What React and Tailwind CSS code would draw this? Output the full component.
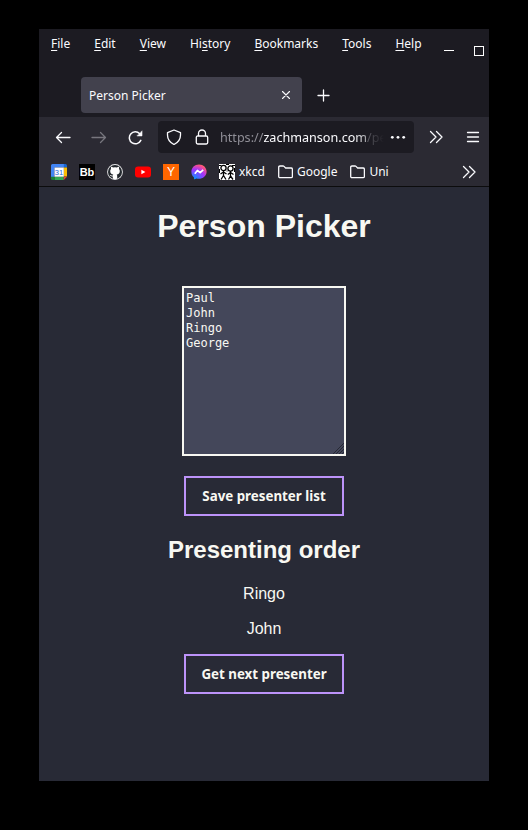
import React from 'react';

const menuItems = [
  ['', 'F', 'ile'],
  ['', 'E', 'dit'],
  ['', 'V', 'iew'],
  ['Hi', 's', 'tory'],
  ['', 'B', 'ookmarks'],
  ['', 'T', 'ools'],
  ['', 'H', 'elp'],
];

function Icon({ children, className = '', size = 16 }) {
  return (
    <svg
      width={size}
      height={size}
      viewBox={`0 0 ${size} ${size}`}
      fill="none"
      stroke="currentColor"
      strokeWidth="1.3"
      strokeLinecap="round"
      strokeLinejoin="round"
      className={`block shrink-0 ${className}`}
    >
      {children}
    </svg>
  );
}

const Chevrons = ({ className }) => (
  <Icon className={className}>
    <path d="M2.500 2.500 8 8l-5.500 5.500M8.500 2.500 14 8l-5.500 5.500" />
  </Icon>
);

const Folder = () => (
  <Icon>
    <path d="M1.700 12.400V3.300q0-1.300 1.300-1.300H6q.6 0 1 .4L8.600 4h5.500q1.300 0 1.300 1.300v7.100q0 1.300-1.300 1.300H3Q1.700 13.700 1.700 12.400Z" />
  </Icon>
);

function MenuBar() {
  return (
    <div className="flex h-11 items-start pl-3 text-xs text-[#fbfbfe]">
      <div className="flex gap-6 pt-[6px] leading-[18px]">
        {menuItems.map(([pre, key, post]) => (
          <span key={key + post}>
            {pre}
            <span className="underline decoration-1 underline-offset-2">{key}</span>
            {post}
          </span>
        ))}
      </div>
      <div className="ml-auto flex pr-[5px] pt-[17px]">
        <div className="mr-5 mt-1 h-px w-[10px] bg-white" />
        <div className="size-[10px] border border-white" />
      </div>
    </div>
  );
}

function TabStrip() {
  return (
    <div className="flex h-11 items-center pl-[42px] text-[#fbfbfe]">
      <div className="flex h-9 w-[221px] items-center justify-between rounded bg-[#42414d] px-2 text-xs">
        <span className="pt-0.5">Person Picker</span>
        <Icon>
          <path strokeWidth="1.1" d="m4.500 4.500 7 7m0-7-7 7" />
        </Icon>
      </div>
      <Icon className="ml-[13px]">
        <path d="M8.500 3v11M3 8.500h11" />
      </Icon>
    </div>
  );
}

function NavBar() {
  return (
    <div className="flex h-10 items-center pl-4 text-[#fbfbfe]">
      <Icon>
        <path d="M15 8.500H1.500m5-5-5 5 5 5" />
      </Icon>
      <Icon className="ml-5 text-[#77767e]">
        <path d="M1 8.500h13.500m-5-5 5 5-5 5" />
      </Icon>
      <Icon className="ml-5">
        <path strokeWidth="1.500" d="M13.800 11.400A6 6 0 1 1 12.700 4.700" />
        <path fill="currentColor" strokeWidth=".6" d="M15 2.200v4.700h-4.700Z" />
      </Icon>
      <div className="ml-[15px] flex h-8 w-64 items-center rounded bg-[#1c1b22] pl-2">
        <Icon>
          <path d="M8 1 14.500 3.600v2.300c0 4-2.500 7.500-6.500 9.600C4 13.400 1.500 9.900 1.500 5.900V3.600Z" />
        </Icon>
        <Icon className="ml-3">
          <path d="M4.500 7V4.500a3.500 3.500 0 0 1 7 0V7M3.700 7h8.600q1.400 0 1.400 1.400v5.200q0 1.400-1.400 1.400H3.700q-1.400 0-1.400-1.400V8.400Q2.300 7 3.700 7Z" />
        </Icon>
        <div className="ml-[10px] w-[164px] overflow-hidden whitespace-nowrap pt-0.5 text-[12.6px] text-[#8f8e96] [mask-image:linear-gradient(to_right,#000_134px,transparent_164px)]">
          https://<span className="text-[#fbfbfe]">zachmanson.com</span>/pe
        </div>
        <svg width="16" height="16" viewBox="0 0 16 16" fill="currentColor" className="ml-[6px] shrink-0">
          <circle cx="2.300" cy="8.300" r="1.400" />
          <circle cx="8" cy="8.300" r="1.400" />
          <circle cx="13.700" cy="8.300" r="1.400" />
        </svg>
      </div>
      <Chevrons className="ml-[14px]" />
      <Icon className="ml-[21px]">
        <path d="M2.500 3.500h11M2.500 8h11M2.500 12.500h11" />
      </Icon>
    </div>
  );
}

function Calendar() {
  return (
    <svg width="16" height="16" viewBox="0 0 16 16">
      <path fill="#4285f4" d="M1.500 0H13v3.500H3.500V13H0V1.500Q0 0 1.500 0Z" />
      <path fill="#1967d2" d="M12.800 0h1.700Q16 0 16 1.500v2h-3.200Z" />
      <path fill="#fbbc04" d="M12.800 3.500H16v9h-3.200Z" />
      <path fill="#34a853" d="M3.500 12.700h9.300V16H3.500Z" />
      <path fill="#188038" d="M0 12.700h3.500V16h-2Q0 16 0 14.500Z" />
      <path fill="#ea4335" d="M12.800 16v-3.300H16Z" />
      <path fill="#fff" d="M3.500 3.500h9.300v9.200H3.500Z" />
      <text x="8" y="10.900" textAnchor="middle" fontSize="7.500" fontFamily="Liberation Sans, sans-serif" fill="#1a66e0">31</text>
    </svg>
  );
}

function GitHub() {
  return (
    <svg width="16" height="16" viewBox="0 0 16 16">
      <circle cx="8" cy="8" r="7.900" fill="#e8e8ea" />
      <circle cx="8" cy="8" r="7" fill="#24292e" />
      <path
        fill="#fff"
        d="M5.800 14.700v-2.200c-2 .4-2.400-.8-2.900-1.400 1.200-.2 1.500 1 2.900.5q.1-.7.500-1.100C4.400 10.300 3.200 9.400 3.200 7q0-1.200.8-2.100-.3-1 .1-2.100 1 0 2.100.8 1.800-.5 3.600 0 1.200-.8 2.100-.8.4 1.100.1 2.100.8.900.8 2.100c0 2.400-1.200 3.300-3.100 3.500q.5.500.5 1.500v2.700Q8 15.400 5.800 14.700Z"
      />
    </svg>
  );
}

function YouTube() {
  return (
    <svg width="16" height="16" viewBox="0 0 16 16">
      <rect x="0" y="2.500" width="16" height="11" rx="3" fill="#f00" />
      <path fill="#fff" d="M6.400 5.700v4.600l4-2.300Z" />
    </svg>
  );
}

function Messenger() {
  return (
    <svg width="16" height="16" viewBox="0 0 16 16">
      <defs>
        <radialGradient id="messenger" cx=".2" cy="1" r="1.100">
          <stop offset="0" stopColor="#0099ff" />
          <stop offset=".6" stopColor="#a033ff" />
          <stop offset=".92" stopColor="#ff5280" />
          <stop offset="1" stopColor="#ff7061" />
        </radialGradient>
      </defs>
      <path
        fill="url(#messenger)"
        d="M8 .4C3.600.400.400 3.500.400 7.700c0 2.300.9 4.200 2.500 5.500l.1 1.500q.1.700.8.500l1.600-.7c5.200 1.300 10.200-2 10.200-6.800C15.600 3.500 12.400.400 8 .400Z"
      />
      <path fill="none" stroke="#fff" strokeWidth="1.700" strokeLinejoin="round" d="M3.800 9.700 6.400 6.500 9.200 8.700 12.200 5.900" />
    </svg>
  );
}

function Xkcd() {
  return (
    <svg width="16" height="16" viewBox="0 0 16 16" fill="none" stroke="#000">
      <path fill="#fff" stroke="none" d="M0 0h16v16H0Z" />
      <circle cx="4.500" cy="4" r="2.600" strokeWidth="1.300" />
      <circle cx="11.500" cy="4.500" r="2.600" strokeWidth="1.300" />
      <path strokeWidth="1.300" d="M4.500 7v4.500M1.500 10l3-2 3 2M4.500 11.500l-2.500 4m2.500-4 2.500 4M11.500 7v5M8.800 10.500l2.700-2 3 2M11.500 12l-2 3.500m2-3.500 2.500 3.500" />
      <path strokeWidth="1" d="M0 1.500h2.500M7 .5h3M13 1.500h3M15.500 4v4M.5 5v4M0 15.500h1M7.500 7h1" />
    </svg>
  );
}

function Bookmarks() {
  return (
    <div className="flex h-[29px] items-center pt-px pl-3 text-xs text-[#fbfbfe]">
      <div className="flex items-center gap-3">
        <Calendar />
        <span className="flex size-4 items-center justify-center bg-black font-['Liberation_Sans',sans-serif] text-[11px] font-bold leading-none text-white">
          Bb
        </span>
        <GitHub />
        <YouTube />
        <span className="flex size-4 items-center justify-center bg-[#ff6600] font-['Liberation_Sans',sans-serif] text-[12px] leading-none text-white">
          Y
        </span>
        <Messenger />
        <span className="flex items-center gap-1"><Xkcd />xkcd</span>
        <span className="flex items-center gap-1"><Folder />Google</span>
        <span className="flex items-center gap-1"><Folder />Uni</span>
      </div>
      <Chevrons className="ml-auto mr-[12px]" />
    </div>
  );
}

function PresenterButton({ children, className = '' }) {
  return (
    <button
      type="button"
      className={`h-10 w-40 whitespace-nowrap border-2 border-[#bd93f9] pt-0.5 text-[13.333px] font-bold text-[#f8f8f2] ${className}`}
    >
      {children}
    </button>
  );
}

function Page() {
  return (
    <main className="flex flex-1 flex-col items-center bg-[#282a36] font-['Liberation_Sans',Arial,sans-serif] text-[#f8f8f2]">
      <h1 className="mt-[21px] text-[32px] font-bold leading-[37px]">Person Picker</h1>
      <div className="relative mt-[41px] h-[170px] w-[164px]">
        <textarea
          className="block size-full resize-none overflow-hidden border-2 border-[#f8f8f2] bg-[#44475a] px-[2px] pb-[2px] pt-[3px] font-['DejaVu_Sans_Mono',monospace] text-xs leading-[15px] text-[#f8f8f2] outline-none"
          defaultValue={'Paul\nJohn\nRingo\nGeorge'}
          spellCheck={false}
        />
        <svg width="11" height="11" viewBox="0 0 11 11" className="pointer-events-none absolute bottom-[2px] right-[2px]" stroke="#20222b" strokeWidth=".8">
          <path d="M0 11 11 0M3 11l8-8M6 11l5-5M9 11l2-2" />
        </svg>
      </div>
      <PresenterButton className="mt-5 font-['Noto_Sans',sans-serif]">Save presenter list</PresenterButton>
      <h2 className="mt-5 text-2xl font-bold leading-7">Presenting order</h2>
      <p className="mt-5 text-base leading-[19px]">Ringo</p>
      <p className="mt-4 text-base leading-[19px]">John</p>
      <PresenterButton className="mt-4 font-['Noto_Sans',sans-serif]">Get next presenter</PresenterButton>
    </main>
  );
}

export default function App() {
  return (
    <div className="flex h-screen w-screen overflow-hidden bg-black pl-[39px] pt-[29px] font-['Noto_Sans',sans-serif]">
      <div className="flex h-[752px] w-[450px] flex-col bg-[#1c1b22]">
        <MenuBar />
        <TabStrip />
        <div className="h-[70px] border-b border-[#0c0c0d] bg-[#2b2a33]">
          <NavBar />
          <Bookmarks />
        </div>
        <Page />
      </div>
    </div>
  );
}
